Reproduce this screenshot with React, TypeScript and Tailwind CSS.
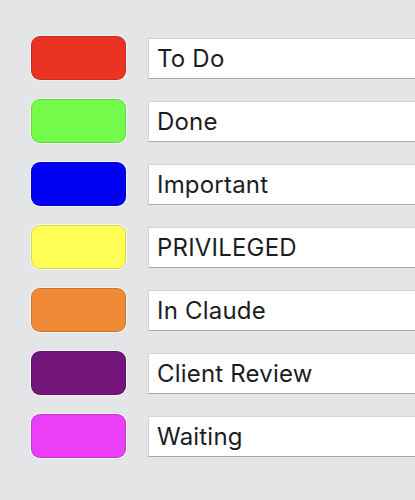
import React from "react";

const rows = [
  { label: "To Do", bg: "bg-[#eb3323]" },
  { label: "Done", bg: "bg-[#75fb4c]" },
  { label: "Important", bg: "bg-[#0000f5]" },
  { label: "PRIVILEGED", bg: "bg-[#fffe54]" },
  { label: "In Claude", bg: "bg-[#f08a37]" },
  { label: "Client Review", bg: "bg-[#74157b]" },
  { label: "Waiting", bg: "bg-[#ea3ff7]" },
];

export default function App() {
  return (
    <div className="w-[415px] h-[500px] overflow-hidden bg-[#e4e5e7] pt-[36px] pl-[31px] font-['Inter','Liberation_Sans',Arial,sans-serif]">
      <div className="flex flex-col gap-[19px]">
        {rows.map((r) => (
          <div key={r.label} className="flex items-center gap-[22px]">
            <div
              className={`w-[95px] h-[44px] shrink-0 rounded-[9px] border border-black/15 shadow-[0_0_0_1px_rgba(255,255,255,0.6)] ${r.bg}`}
            />
            <div className="w-[400px] h-[41px] shrink-0 bg-white border border-[#d3d3d5] border-b-[#a9a9ab] flex items-center pl-[8px] pt-[2px] text-[24px] tracking-[0.2px] text-[#1d1d1f] leading-none">
              {r.label}
            </div>
          </div>
        ))}
      </div>
    </div>
  );
}
